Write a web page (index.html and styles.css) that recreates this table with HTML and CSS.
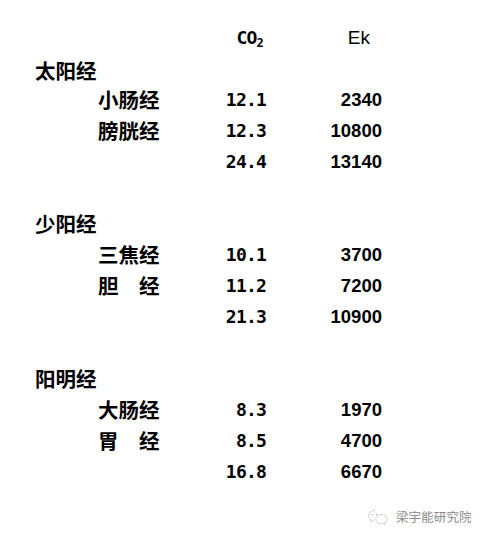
FILE: index.html
```html
<!DOCTYPE html>
<html lang="zh">
<head>
<meta charset="utf-8">
<link rel="stylesheet" href="styles.css">
</head>
<body>
<div class="page">
  <div class="table">
    <div class="row head">
      <span class="name"></span>
      <span class="co2">CO<sub>2</sub></span>
      <span class="ek ek-head">Ek</span>
    </div>

    <div class="row title first"><span class="group">太阳经</span></div>
    <div class="row"><span class="name">小肠经</span><span class="co2">12.1</span><span class="ek">2340</span></div>
    <div class="row"><span class="name">膀胱经</span><span class="co2">12.3</span><span class="ek">10800</span></div>
    <div class="row"><span class="name"></span><span class="co2">24.4</span><span class="ek">13140</span></div>
    <div class="row blank"></div>

    <div class="row title"><span class="group">少阳经</span></div>
    <div class="row"><span class="name">三焦经</span><span class="co2">10.1</span><span class="ek">3700</span></div>
    <div class="row"><span class="name">胆　经</span><span class="co2">11.2</span><span class="ek">7200</span></div>
    <div class="row"><span class="name"></span><span class="co2">21.3</span><span class="ek">10900</span></div>
    <div class="row blank"></div>

    <div class="row title"><span class="group">阳明经</span></div>
    <div class="row"><span class="name">大肠经</span><span class="co2">8.3</span><span class="ek">1970</span></div>
    <div class="row"><span class="name">胃　经</span><span class="co2">8.5</span><span class="ek">4700</span></div>
    <div class="row"><span class="name"></span><span class="co2">16.8</span><span class="ek">6670</span></div>
  </div>

  <div class="watermark">
    <svg class="wm-icon" width="22" height="16" viewBox="0 0 22 16">
      <path d="M8 1.5c-3.6 0-6.5 2.4-6.5 5.3 0 1.7 1 3.2 2.5 4.2l-.6 1.9 2.2-1.2c.8.2 1.6.4 2.4.4" fill="none" stroke="#b5b5b5" stroke-width="1" stroke-dasharray="1.6 1"/>
      <path d="M14.5 5.5c-3.3 0-5.800 2.1-5.8 4.6s2.6 4.6 5.8 4.6c.7 0 1.4-.1 2-.3l1.9 1-.5-1.7c1.4-.9 2.3-2.2 2.3-3.6 0-2.5-2.6-4.6-5.7-4.6z" fill="none" stroke="#b5b5b5" stroke-width="1" stroke-dasharray="1.6 1"/>
      <circle cx="5.5" cy="5.5" r=".8" fill="#b5b5b5"/>
      <circle cx="9.5" cy="5.5" r=".8" fill="#b5b5b5"/>
    </svg>
    <span class="wm-text">梁宇能研究院</span>
  </div>
</div>
</body>
</html>
```

FILE: styles.css
```css
html, body {
  margin: 0;
  padding: 0;
  background: #ffffff;
}

.page {
  position: relative;
  width: 484px;
  height: 537px;
  overflow: hidden;
  color: #000;
  font-family: "Noto Sans CJK SC", "Noto Sans", sans-serif;
}

.table {
  padding: 22px 0 0 35px;
}

.row {
  display: grid;
  grid-template-columns: 63px 70px 98px 116px;
  height: 31px;
  align-items: center;
}

.title.first {
  padding-top: 2px;
  height: 29px;
}

.group,
.name {
  font-family: "Noto Sans CJK SC", sans-serif;
  font-weight: 700;
  font-size: 20.5px;
  line-height: 31px;
  white-space: nowrap;
}

.group {
  grid-column: 1 / 4;
}

.name {
  grid-column: 2;
}

.co2 {
  grid-column: 3;
  text-align: right;
  font-family: "DejaVu Sans Mono", monospace;
  font-weight: 700;
  font-size: 18px;
  letter-spacing: -0.8px;
  line-height: 31px;
}

.co2 sub {
  font-size: 12px;
  vertical-align: -3px;
  line-height: 0;
}

.head .co2 {
  padding-right: 3px;
}

.ek {
  grid-column: 4;
  text-align: right;
  font-family: "Liberation Sans", Arial, sans-serif;
  font-weight: 700;
  font-size: 18.5px;
  line-height: 31px;
}

.ek-head {
  font-weight: 400;
  font-size: 19px;
  padding-right: 12px;
}

.watermark {
  position: absolute;
  left: 367px;
  top: 507px;
  display: flex;
  align-items: center;
  gap: 7px;
}

.wm-text {
  font-family: "Noto Sans CJK SC", sans-serif;
  font-size: 12.5px;
  color: #8a8a8a;
  letter-spacing: 0.1px;
}
```
